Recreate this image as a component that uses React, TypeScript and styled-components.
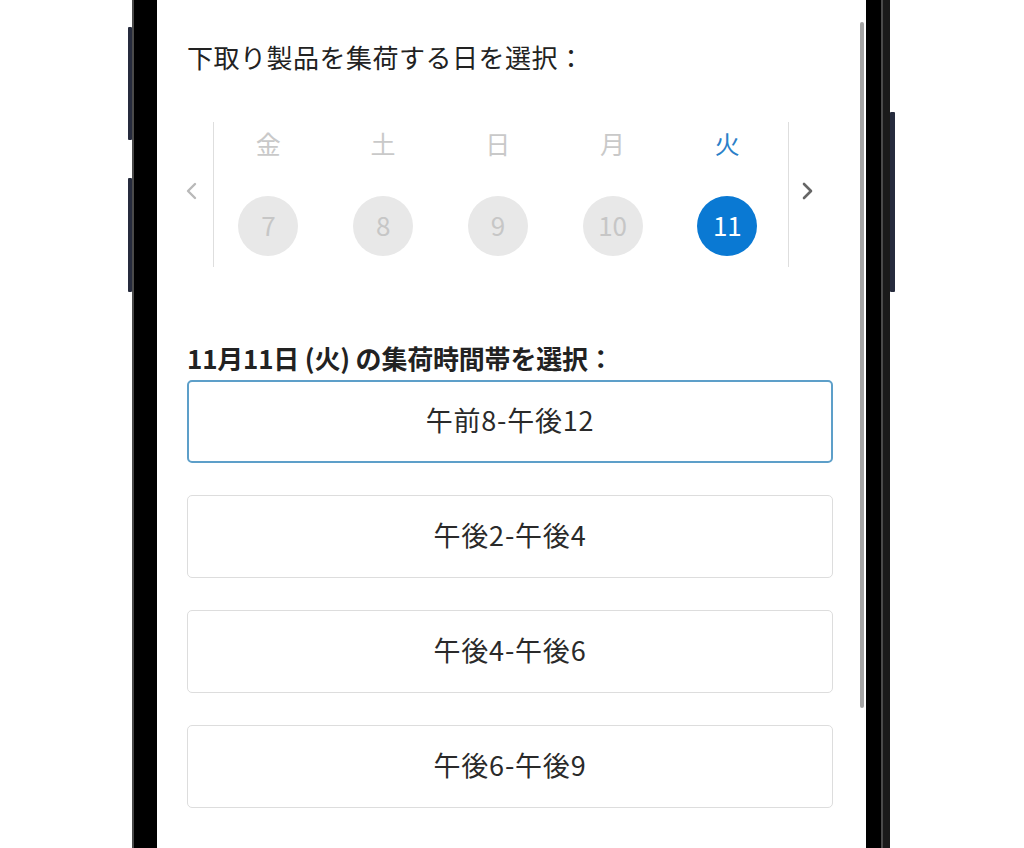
import React, { useState } from 'react';
import styled, { createGlobalStyle, css } from 'styled-components';

const FONT = `"Noto Sans CJK JP", "Noto Sans", "Liberation Sans", sans-serif`;

const DAYS = [
  { id: 7, label: '金', available: false },
  { id: 8, label: '土', available: false },
  { id: 9, label: '日', available: false },
  { id: 10, label: '月', available: false },
  { id: 11, label: '火', available: true },
];

const SLOTS = ['午前8-午後12', '午後2-午後4', '午後4-午後6', '午後6-午後9'];

const GlobalStyle = createGlobalStyle`
  html, body {
    margin: 0;
    padding: 0;
    background: #ffffff;
    overflow: hidden;
  }
  body {
    font-family: ${FONT};
  }
`;

const App = (): React.JSX.Element => {
  const [selectedDay, setSelectedDay] = useState(11);
  const [selectedSlot, setSelectedSlot] = useState(0);

  return (
    <>
      <GlobalStyle />
      <Stage>
        <Phone>
          <LeftRail>
            <SideKey $height={113} $top={27} />
            <SideKey $height={114} $top={38} />
          </LeftRail>

          <Bezel>
            <Screen>
              <Content>
                <Heading>下取り製品を集荷する日を選択：</Heading>

                <Carousel>
                  <NavButton $side="left" aria-label="前へ">
                    <svg width="12" height="18" viewBox="0 0 12 18">
                      <path d="M10 2 L3 9 L10 16" fill="none" stroke="#b9b9b9" strokeWidth="2.4" strokeLinecap="round" strokeLinejoin="round" />
                    </svg>
                  </NavButton>
                  <Divider />
                  <DaysGrid>
                    {DAYS.map((day) => (
                      <DayColumn key={day.id} onClick={() => day.available && setSelectedDay(day.id)}>
                        <DayLabel $active={day.available}>{day.label}</DayLabel>
                        <DayCircle $selected={selectedDay === day.id}>{day.id}</DayCircle>
                      </DayColumn>
                    ))}
                  </DaysGrid>
                  <Divider $gap={3} />
                  <NavButton $side="right" aria-label="次へ">
                    <svg width="13" height="18" viewBox="0 0 13 18">
                      <path d="M3 2 L10 9 L3 16" fill="none" stroke="#666666" strokeWidth="2.6" strokeLinecap="round" strokeLinejoin="round" />
                    </svg>
                  </NavButton>
                </Carousel>

                <SubHeading>11月11日 (火) の集荷時間帯を選択：</SubHeading>

                <SlotList>
                  {SLOTS.map((slot, i) => (
                    <SlotButton key={slot} $selected={selectedSlot === i} onClick={() => setSelectedSlot(i)}>
                      {slot}
                    </SlotButton>
                  ))}
                </SlotList>
              </Content>
              <ScrollThumb />
            </Screen>
          </Bezel>

          <RightRail>
            <SideKey $height={180} $top={112} />
          </RightRail>
        </Phone>
      </Stage>
    </>
  );
};

const Stage = styled.div`
  width: 1024px;
  height: 848px;
  display: flex;
  padding-left: 128px;
  box-sizing: border-box;
  background: #ffffff;
`;

const Phone = styled.div`
  display: flex;
  height: 848px;
`;

const LeftRail = styled.div`
  width: 4px;
  display: flex;
  flex-direction: column;
`;

const RightRail = styled.div`
  width: 5px;
  display: flex;
  flex-direction: column;
`;

const SideKey = styled.div<{ $height: number; $top: number }>`
  height: ${(p) => p.$height}px;
  margin-top: ${(p) => p.$top}px;
  background: #262b3d;
  border-radius: 1px;
`;

const Bezel = styled.div`
  display: flex;
  height: 100%;
  background: #000000;
  padding: 0 24px 0 25px;
  box-shadow: inset 2px 0 0 #4a4a4a, inset -7px 0 0 #1a1a1a, inset -9px 0 0 #4a4a4a;
`;

const Screen = styled.div`
  position: relative;
  width: 709px;
  height: 100%;
  background: #ffffff;
  overflow: hidden;
`;

const Content = styled.div`
  display: flex;
  flex-direction: column;
  padding: 39px 33px 0 30px;
  color: #222222;
`;

const Heading = styled.h2`
  margin: 0;
  font-size: 26px;
  line-height: 36px;
  font-weight: 400;
  letter-spacing: 0.5px;
  color: #222222;
`;

const Carousel = styled.div`
  display: flex;
  align-items: stretch;
  height: 145px;
  margin-top: 47px;
`;

const NavButton = styled.button<{ $side: 'left' | 'right' }>`
  display: flex;
  align-items: center;
  border: none;
  background: transparent;
  padding: 0 0 8px 0;
  cursor: pointer;

  ${(p) =>
    p.$side === 'left'
      ? css`
          width: 26px;
          margin-left: -2px;
          padding-right: 2px;
          box-sizing: content-box;
        `
      : css`
          flex: 1;
          padding-left: 12px;
        `}
`;

const Divider = styled.div<{ $gap?: number }>`
  width: 1px;
  background: #dedede;
  margin-left: ${(p) => p.$gap ?? 0}px;
`;

const DaysGrid = styled.div`
  display: grid;
  grid-template-columns: repeat(5, 114.75px);
  margin-left: -3px;
`;

const DayColumn = styled.div`
  display: flex;
  flex-direction: column;
  align-items: center;
  padding-top: 3px;
  cursor: pointer;
`;

const DayLabel = styled.span<{ $active: boolean }>`
  font-size: 25px;
  line-height: 36px;
  color: ${(p) => (p.$active ? '#2a80c8' : '#c9c9c9')};
`;

const DayCircle = styled.div<{ $selected: boolean }>`
  width: 60px;
  height: 60px;
  margin-top: 35px;
  box-sizing: border-box;
  padding-bottom: 4px;
  border-radius: 50%;
  display: flex;
  align-items: center;
  justify-content: center;
  font-size: 26px;
  background: ${(p) => (p.$selected ? '#0a79d3' : '#e8e8e8')};
  color: ${(p) => (p.$selected ? '#ffffff' : '#c6c6c6')};
`;

const SubHeading = styled.h3`
  margin: 73px 0 0;
  font-size: 26px;
  line-height: 36px;
  font-weight: 700;
  letter-spacing: -0.2px;
  color: #222222;
`;

const SlotList = styled.div`
  display: flex;
  flex-direction: column;
  gap: 32px;
  margin-top: 4px;
`;

const SlotButton = styled.button<{ $selected: boolean }>`
  height: 83px;
  width: 100%;
  box-sizing: border-box;
  padding: 0 0 5px;
  background: #ffffff;
  border-radius: 5px;
  font-family: ${FONT};
  font-size: 27px;
  letter-spacing: 0.8px;
  color: #2a2a2a;
  cursor: pointer;
  border: ${(p) => (p.$selected ? '2px solid #5d9fc9' : '1.5px solid #dddddd')};
`;

const ScrollThumb = styled.div`
  position: absolute;
  top: 22px;
  right: 2px;
  width: 4px;
  height: 686px;
  border-radius: 2px;
  background: #a3a3a3;
`;

export default App;
